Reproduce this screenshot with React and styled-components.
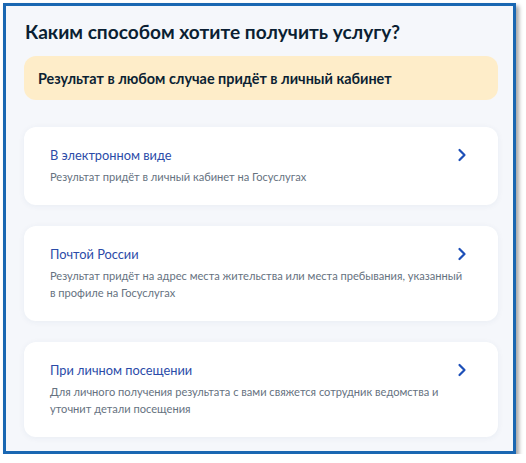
import styled, { createGlobalStyle } from "styled-components";

const GlobalStyle = createGlobalStyle`
  body {
    margin: 0;
    background: #ffffff;
    font-family: Lato, "Noto Sans", sans-serif;
  }
`;

const Frame = styled.div`
  box-sizing: border-box;
  margin: 3px 0 0 3px;
  width: 513px;
  height: 451px;
  border: 3px solid #1a67b2;
  background: #f5f7fb;
  box-shadow: 3px 3px 4px rgba(0, 0, 0, 0.35);
  padding: 13px 15px 0 18px;
  display: flex;
  flex-direction: column;
  overflow: hidden;
`;

const Title = styled.h1`
  margin: 0 0 11px 1px;
  font-size: 19.1px;
  line-height: 26px;
  font-weight: 700;
  color: #0b1f33;
`;

const Notice = styled.div`
  height: 44px;
  border-radius: 12px;
  background: #feedc9;
  display: flex;
  align-items: center;
  padding: 0 14px;
  font-size: 14.4px;
  font-weight: 700;
  color: #0b1f33;
  margin-bottom: 27px;
`;

const List = styled.div`
  display: flex;
  flex-direction: column;
  gap: 21px;
`;

const Card = styled.div`
  background: #ffffff;
  border-radius: 12px;
  box-shadow: 0 1px 6px rgba(40, 60, 120, 0.06);
  padding: 19px 26px 20px 26px;
  display: flex;
  align-items: flex-start;
  min-height: ${(props) => props.minHeight || 0}px;
  box-sizing: border-box;
`;

const CardBody = styled.div`
  flex: 1;
  min-width: 0;
`;

const CardTitle = styled.div`
  font-size: 12.8px;
  line-height: 18px;
  color: #2b4ba8;
  margin-bottom: 4px;
`;

/* the description runs partly under the chevron column */
const CardText = styled.div`
  font-size: 11.1px;
  line-height: 17px;
  color: #66727f;
  margin-right: -11px;
`;

const Chevron = styled.svg`
  flex: none;
  margin: 2px 4px 0 0;
  width: 12px;
  height: 14px;
`;

const options = [
  {
    title: "В электронном виде",
    text: "Результат придёт в личный кабинет на Госуслугах",
    minHeight: 78,
  },
  {
    title: "Почтой России",
    text: "Результат придёт на адрес места жительства или места пребывания, указанный в профиле на Госуслугах",
    minHeight: 94,
  },
  {
    title: "При личном посещении",
    text: "Для личного получения результата с вами свяжется сотрудник ведомства и уточнит детали посещения",
    minHeight: 94,
  },
];

const App = () => {
  return (
    <>
      <GlobalStyle />
      <Frame>
        <Title>Каким способом хотите получить услугу?</Title>
        <Notice>Результат в любом случае придёт в личный кабинет</Notice>
        <List>
          {options.map((item, index) => (
            <Card key={index} minHeight={item.minHeight}>
              <CardBody>
                <CardTitle>{item.title}</CardTitle>
                <CardText>{item.text}</CardText>
              </CardBody>
              <Chevron viewBox="0 0 12 14">
                <path
                  d="M3.5 2 L8.5 7 L3.5 12"
                  fill="none"
                  stroke="#1d4fb8"
                  strokeWidth="2.2"
                  strokeLinecap="round"
                  strokeLinejoin="round"
                />
              </Chevron>
            </Card>
          ))}
        </List>
      </Frame>
    </>
  );
};

export default App;
